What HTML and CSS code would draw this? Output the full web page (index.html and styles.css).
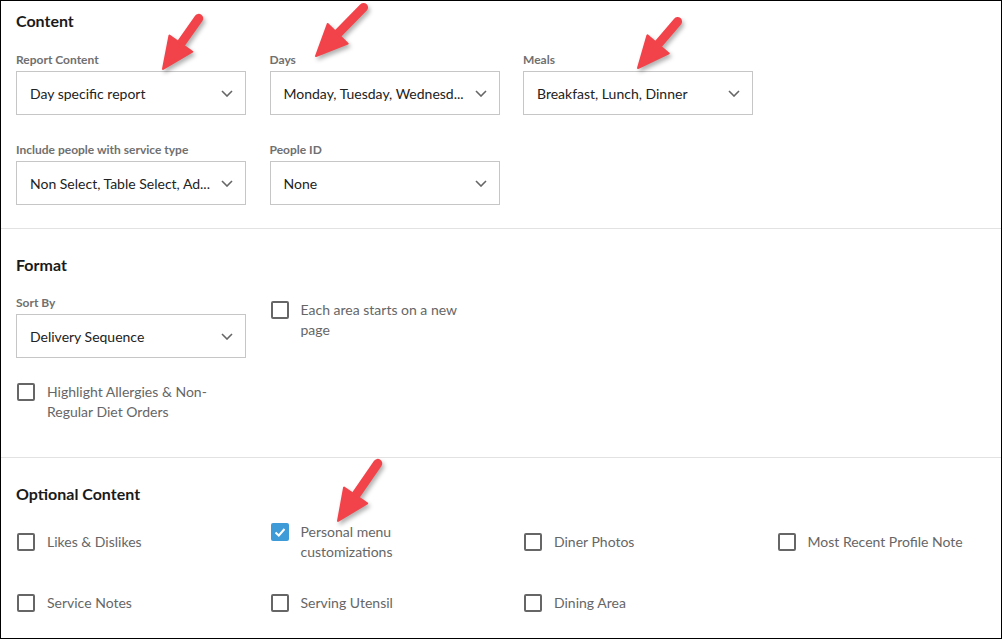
FILE: index.html
```html
<!DOCTYPE html>
<html lang="en">
<head>
  <meta charset="UTF-8" />
  <title>Report Options</title>
  <link rel="stylesheet" href="styles.css">
</head>
<body>
  <div class="frame">

    <section class="block block-first">
      <h3>Content</h3>
      <div class="fields">
        <div class="field">
          <label>Report Content</label>
          <div class="select"><span>Day specific report</span><svg viewBox="0 0 12 7"><polyline points="1,1 6,6 11,1"/></svg></div>
        </div>
        <div class="field">
          <label>Days</label>
          <div class="select"><span>Monday, Tuesday, Wednesd...</span><svg viewBox="0 0 12 7"><polyline points="1,1 6,6 11,1"/></svg></div>
        </div>
        <div class="field">
          <label>Meals</label>
          <div class="select"><span>Breakfast, Lunch, Dinner</span><svg viewBox="0 0 12 7"><polyline points="1,1 6,6 11,1"/></svg></div>
        </div>
        <div class="field field-newrow">
          <label>Include people with service type</label>
          <div class="select"><span>Non Select, Table Select, Ad...</span><svg viewBox="0 0 12 7"><polyline points="1,1 6,6 11,1"/></svg></div>
        </div>
        <div class="field">
          <label>People ID</label>
          <div class="select"><span>None</span><svg viewBox="0 0 12 7"><polyline points="1,1 6,6 11,1"/></svg></div>
        </div>
      </div>
    </section>

    <section class="block block-format">
      <h3>Format</h3>
      <div class="fields">
        <div class="field">
          <label>Sort By</label>
          <div class="select"><span>Delivery Sequence</span><svg viewBox="0 0 12 7"><polyline points="1,1 6,6 11,1"/></svg></div>
        </div>
        <div class="check check-aside">
          <span class="box"></span>
          <span class="text">Each area starts on a new page</span>
        </div>
        <div class="check check-newrow">
          <span class="box"></span>
          <span class="text">Highlight Allergies &amp; Non-Regular Diet Orders</span>
        </div>
      </div>
    </section>

    <section class="block">
      <h3 class="tight">Optional Content</h3>
      <div class="checks">
        <div class="check"><span class="box"></span><span class="text">Likes &amp; Dislikes</span></div>
        <div class="check"><span class="box checked"><svg viewBox="0 0 18 18"><polyline points="4.5,9.5 7.8,12.5 13.5,6"/></svg></span><span class="text">Personal menu customizations</span></div>
        <div class="check"><span class="box"></span><span class="text">Diner Photos</span></div>
        <div class="check"><span class="box"></span><span class="text">Most Recent Profile Note</span></div>
        <div class="check"><span class="box"></span><span class="text">Service Notes</span></div>
        <div class="check"><span class="box"></span><span class="text">Serving Utensil</span></div>
        <div class="check"><span class="box"></span><span class="text">Dining Area</span></div>
      </div>
    </section>

    <!-- red callout arrows drawn over the form -->
    <svg class="arrows" viewBox="0 0 1002 639">
      <g transform="translate(162 68) rotate(125.2)"><line x1="-62" y1="0" x2="-26" y2="0"/><polygon points="0,0 -31,-14 -31,14"/></g>
      <g transform="translate(315 55) rotate(134.4)"><line x1="-68" y1="0" x2="-26" y2="0"/><polygon points="0,0 -31,-14 -31,14"/></g>
      <g transform="translate(637 67) rotate(130.4)"><line x1="-61" y1="0" x2="-26" y2="0"/><polygon points="0,0 -31,-14 -31,14"/></g>
      <g transform="translate(337 520) rotate(124.6)"><line x1="-70" y1="0" x2="-26" y2="0"/><polygon points="0,0 -31,-14 -31,14"/></g>
    </svg>
  </div>
</body>
</html>
```

FILE: styles.css
```css
body {
  margin: 0;
  font-family: Lato, "Open Sans", Arial, sans-serif;
  background: #fff;
}
.frame {
  position: relative;
  width: 1002px;
  height: 639px;
  box-sizing: border-box;
  border: 1px solid #000;
  background: #fff;
  overflow: hidden;
}
.block {
  padding: 26px 15px 24px;
  border-top: 1px solid #e2e2e2;
}
.block-first {
  padding-top: 10px;
  padding-bottom: 23px;
  border-top: none;
}
.block-first h3 {
  margin-bottom: 22px;
}
.block-format {
  padding-bottom: 35px;
}
h3 {
  margin: 0 0 21px;
  font-size: 16px;
  line-height: 20px;
  font-weight: bold;
  color: #1a1a1a;
}
h3.tight {
  margin-bottom: 18px;
}
.fields {
  display: grid;
  grid-template-columns: repeat(3, 253.5px);
  row-gap: 28px;
  align-items: start;
}
.field-newrow,
.check-newrow {
  grid-column: 1;
}
.check-newrow {
  margin-top: -4px;
}
label {
  display: block;
  font-size: 12px;
  line-height: 14px;
  font-weight: bold;
  color: #707070;
  margin-bottom: 4px;
}
.select {
  width: 230px;
  height: 44px;
  box-sizing: border-box;
  border: 1px solid #c6c6c6;
  padding: 0 12px 0 13px;
  display: flex;
  align-items: center;
  justify-content: space-between;
  font-size: 14px;
  color: #222;
}
.select svg {
  width: 12px;
  height: 7px;
  fill: none;
  stroke: #666;
  stroke-width: 1.6;
}
.check {
  display: flex;
  align-items: flex-start;
  gap: 12px;
  padding-left: 1px;
}
.check-aside {
  margin-top: 4px;
}
.box {
  flex: none;
  width: 18px;
  height: 18px;
  margin-top: 1px;
  box-sizing: border-box;
  border: 2px solid #666;
  border-radius: 2px;
}
.box.checked {
  border: none;
  background: #3f9ad8;
}
.box.checked svg {
  display: block;
  width: 18px;
  height: 18px;
  fill: none;
  stroke: #fff;
  stroke-width: 2;
}
.text {
  max-width: 165px;
  font-size: 14px;
  line-height: 20px;
  color: #666;
}
.checks {
  display: grid;
  grid-template-columns: repeat(4, 253.5px);
  row-gap: 31px;
  align-items: center;
}
.arrows {
  position: absolute;
  left: 0;
  top: 0;
  width: 1002px;
  height: 639px;
  pointer-events: none;
  filter: drop-shadow(2px 3px 2px rgba(0,0,0,0.3));
}
.arrows line {
  stroke: #f2434a;
  stroke-width: 9;
  stroke-linecap: round;
}
.arrows polygon {
  fill: #f2434a;
  stroke: #f2434a;
  stroke-width: 2;
  stroke-linejoin: round;
}
```
